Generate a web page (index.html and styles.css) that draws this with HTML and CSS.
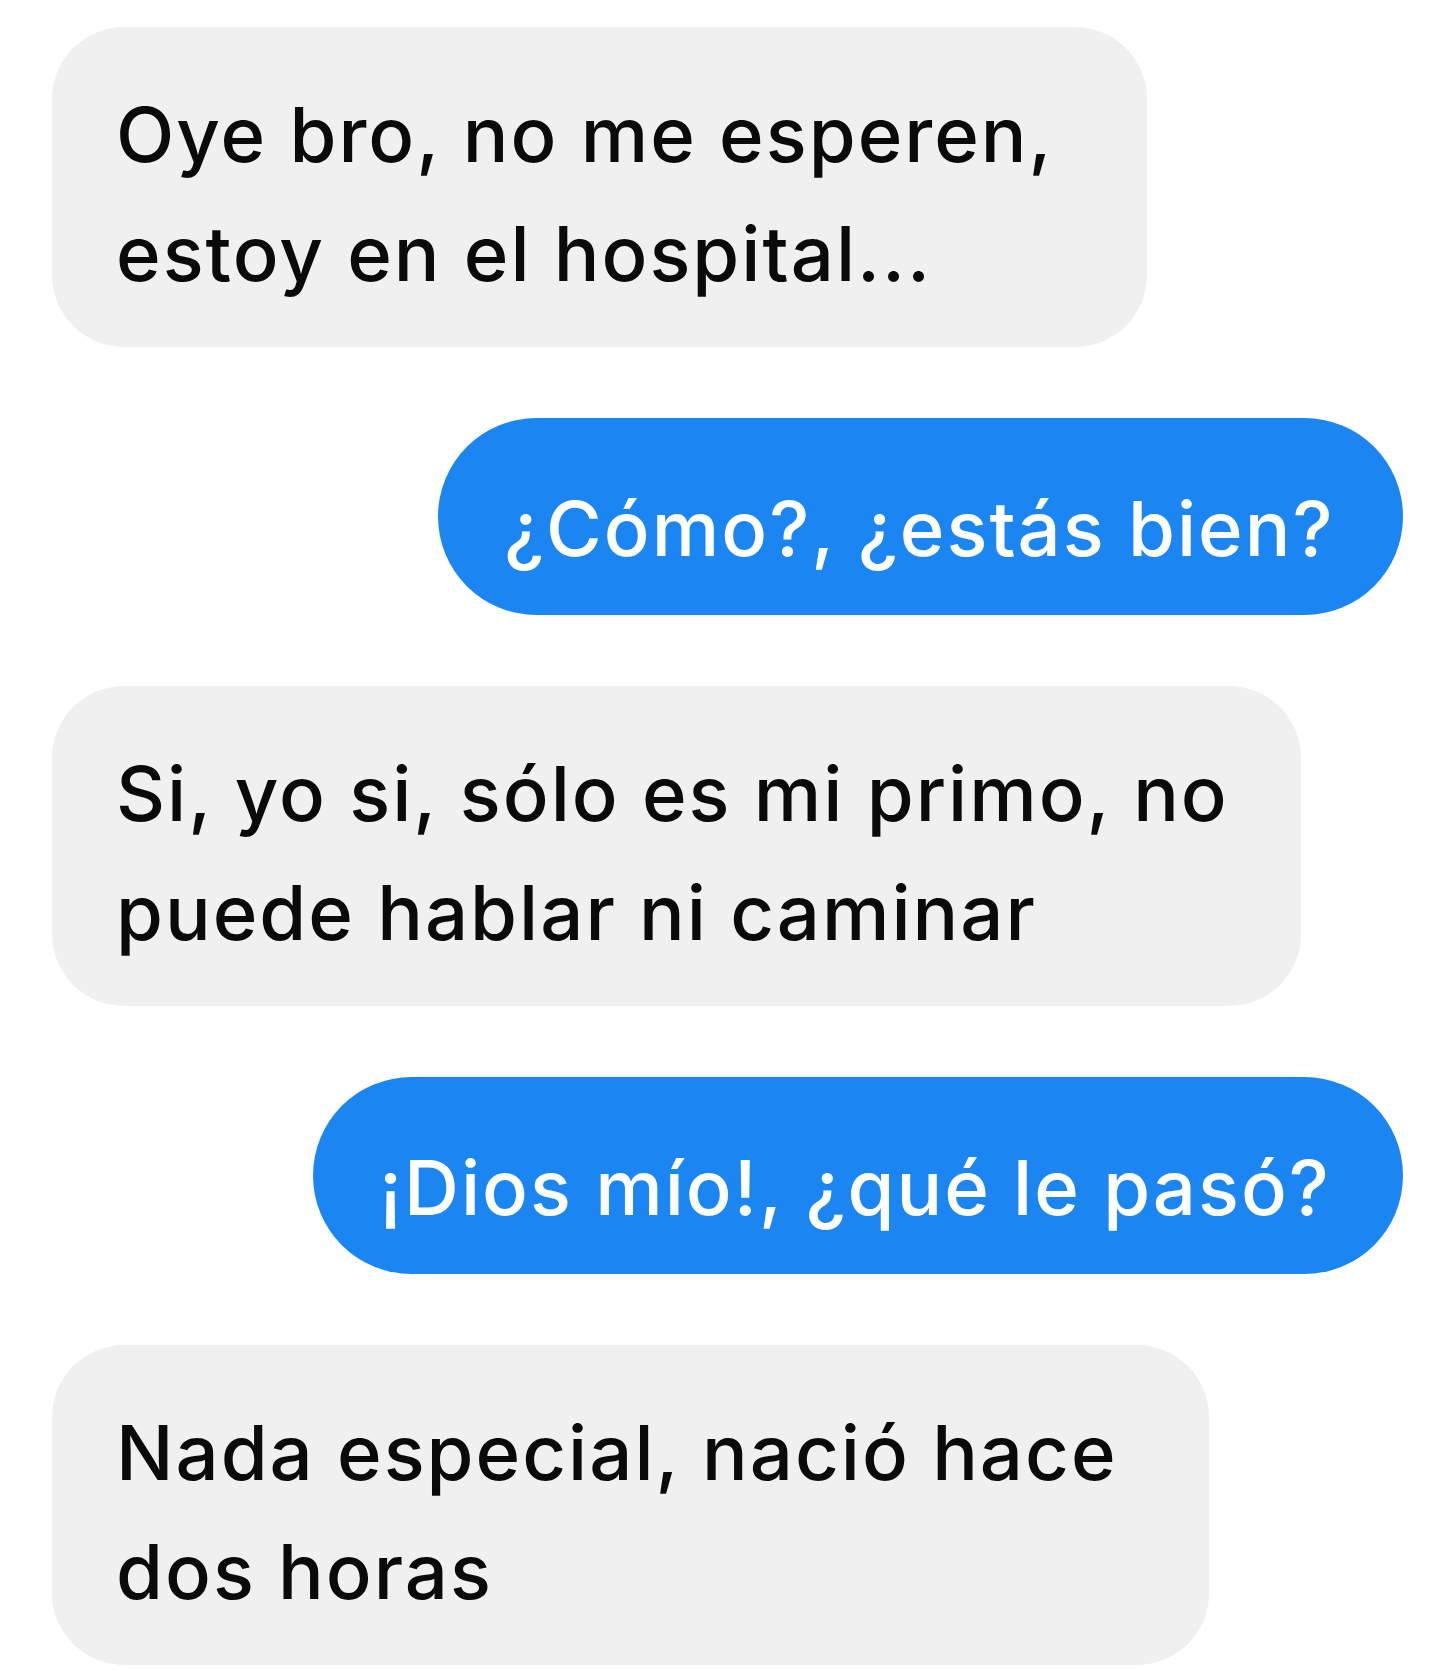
FILE: index.html
```html
<!DOCTYPE html>
<html lang="es">
<head>
<meta charset="utf-8">
<title>Chat</title>
<link rel="stylesheet" href="styles.css">
</head>
<body>
<main class="chat">
  <div class="msg msg-in">
    <p class="bubble bubble-gray w1">Oye bro, no me esperen,<br>estoy en el hospital...</p>
  </div>
  <div class="msg msg-out">
    <p class="bubble bubble-blue w2">¿Cómo?, ¿estás bien?</p>
  </div>
  <div class="msg msg-in">
    <p class="bubble bubble-gray w3">Si, yo si, sólo es mi primo, no<br>puede hablar ni caminar</p>
  </div>
  <div class="msg msg-out">
    <p class="bubble bubble-blue w4">¡Dios mío!, ¿qué le pasó?</p>
  </div>
  <div class="msg msg-in">
    <p class="bubble bubble-gray w5">Nada especial, nació hace<br>dos horas</p>
  </div>
</main>
</body>
</html>
```

FILE: styles.css
```css
* { box-sizing: border-box; }
html, body {
  margin: 0;
  padding: 0;
  background: #ffffff;
}
.chat {
  display: flex;
  flex-direction: column;
  gap: 71px;
  padding: 27px 37px 0 52px;
  font-family: "Inter", "Liberation Sans", Arial, sans-serif;
  font-size: 76px;
  font-weight: 450;
  line-height: 119px;
  letter-spacing: 2px;
}
.msg { display: flex; }
.msg-in { justify-content: flex-start; }
.msg-out { justify-content: flex-end; }
.bubble {
  margin: 0;
  white-space: nowrap;
}
.bubble-gray {
  background: #f0f0f1;
  color: #0a0a0a;
  border-radius: 72px;
  padding: 48px 30px 35px 64px;
  height: 320px;
}
.bubble-blue {
  background: #1b86f1;
  color: #ffffff;
  border-radius: 99px;
  padding: 51px 30px 27px 66px;
  height: 197px;
}
.w1 { width: 1095px; }
.w2 { width: 965px; }
.w3 { width: 1249px; }
.w4 { width: 1090px; }
.w5 { width: 1157px; }
```
